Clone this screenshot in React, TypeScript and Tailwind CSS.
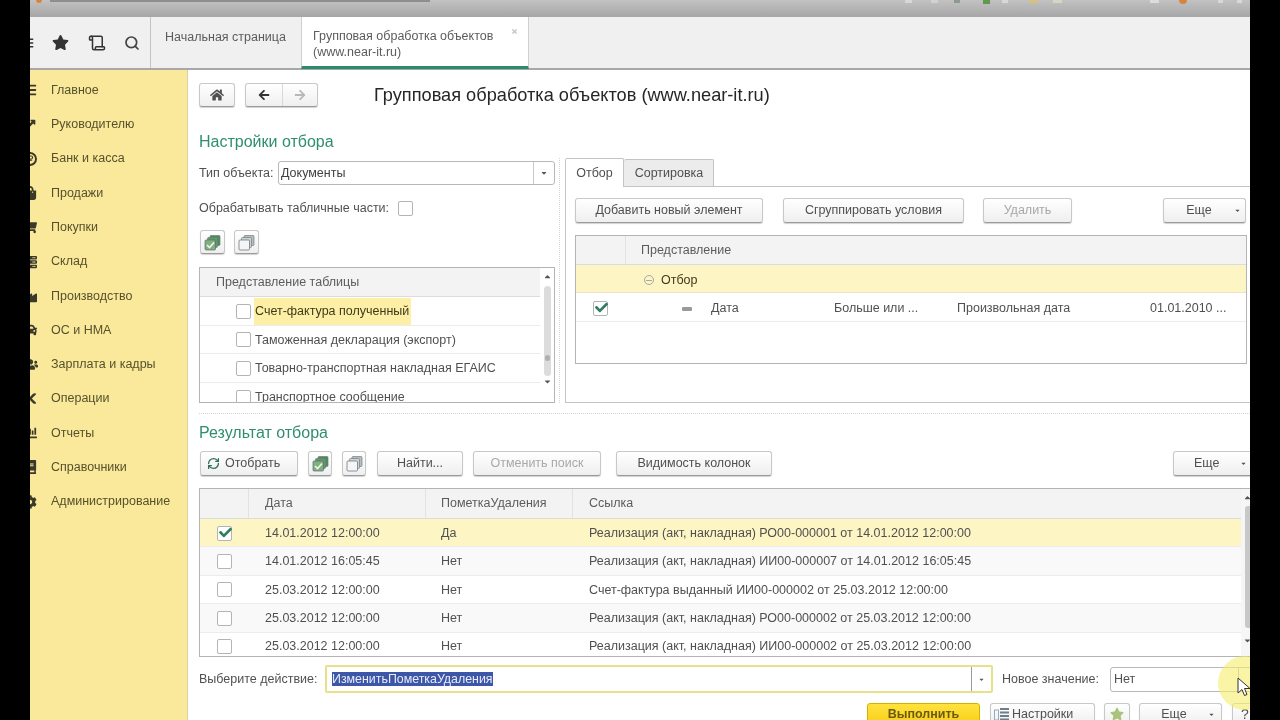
import React from "react";
import { Scroll, Search, RefreshCw } from "lucide-react";
import {
  FaArrowLeft,
  FaArrowRight,
  FaBars,
  FaBook,
  FaCaretDown,
  FaCaretUp,
  FaChartBar,
  FaCheck,
  FaCog,
  FaHome,
  FaIndustry,
  FaLongArrowAltRight,
  FaRubleSign,
  FaServer,
  FaShoppingBag,
  FaShoppingCart,
  FaStar,
  FaTimes,
  FaUsers,
  FaCut,
  FaCar,
} from "react-icons/fa";

const sections = [
  { label: "Главное", icon: <FaBars size={14} /> },
  { label: "Руководителю", icon: <FaLongArrowAltRight size={15} className="-rotate-45" /> },
  {
    label: "Банк и касса",
    icon: (
      <div className="flex h-[14px] w-[14px] items-center justify-center rounded-full border-2 border-[#3b3a2a]">
        <FaRubleSign size={7} />
      </div>
    ),
  },
  { label: "Продажи", icon: <FaShoppingBag size={14} /> },
  { label: "Покупки", icon: <FaShoppingCart size={14} /> },
  { label: "Склад", icon: <FaServer size={14} /> },
  { label: "Производство", icon: <FaIndustry size={14} /> },
  { label: "ОС и НМА", icon: <FaCar size={14} /> },
  { label: "Зарплата и кадры", icon: <FaUsers size={15} /> },
  { label: "Операции", icon: <FaCut size={13} /> },
  { label: "Отчеты", icon: <FaChartBar size={14} /> },
  { label: "Справочники", icon: <FaBook size={14} /> },
  { label: "Администрирование", icon: <FaCog size={14} /> },
];

const tableParts = [
  "Счет-фактура полученный",
  "Таможенная декларация (экспорт)",
  "Товарно-транспортная накладная ЕГАИС",
  "Транспортное сообщение",
];

const results = [
  { date: "14.01.2012 12:00:00", mark: "Да", link: "Реализация (акт, накладная) РО00-000001 от 14.01.2012 12:00:00", checked: true },
  { date: "14.01.2012 16:05:45", mark: "Нет", link: "Реализация (акт, накладная) ИИ00-000007 от 14.01.2012 16:05:45" },
  { date: "25.03.2012 12:00:00", mark: "Нет", link: "Счет-фактура выданный ИИ00-000002 от 25.03.2012 12:00:00" },
  { date: "25.03.2012 12:00:00", mark: "Нет", link: "Реализация (акт, накладная) РО00-000002 от 25.03.2012 12:00:00" },
  { date: "25.03.2012 12:00:00", mark: "Нет", link: "Реализация (акт, накладная) ИИ00-000002 от 25.03.2012 12:00:00" },
];

const Btn = ({
  className = "",
  children,
  disabled,
}: {
  className?: string;
  children?: React.ReactNode;
  disabled?: boolean;
}) => (
  <div
    className={`flex shrink-0 items-center justify-center rounded-[3px] border border-[#c8c8c8] border-b-[#9a9a9a] bg-gradient-to-b from-white to-[#efefef] shadow-[0_1px_1px_rgba(0,0,0,0.18)] ${
      disabled ? "text-[#a8a8a8]" : "text-[#505050]"
    } ${className}`}
  >
    {children}
  </div>
);

const Box = ({ checked, className = "" }: { checked?: boolean; className?: string }) => (
  <div className={`relative h-[15px] w-[15px] shrink-0 rounded-[2px] border border-[#b4b4b4] bg-white ${className}`}>
    {checked && <FaCheck size={13} className="absolute left-[1px] top-[-1px] text-[#2f7d62]" />}
  </div>
);

const StackIcon = ({ green }: { green?: boolean }) => (
  <svg width="17" height="17" viewBox="0 0 17 17">
    <rect x="6" y="1.5" width="10" height="10" rx="1" fill={green ? "#4d8a5c" : "#b9bec2"} stroke="#6f7f78" strokeWidth="0.7" />
    <rect x="3.5" y="3.5" width="10" height="10" rx="1" fill={green ? "#5f9a68" : "#cfd3d6"} stroke="#6f7f78" strokeWidth="0.7" />
    <rect x="1" y="6" width="10.5" height="10" rx="1" fill={green ? "#7eb27d" : "#f4f5f6"} stroke="#667" strokeWidth="0.7" />
    {green && <path d="M3 11l2.5 2.5L10 8.5" stroke="#f2f7ee" strokeWidth="1.6" fill="none" />}
  </svg>
);

const Scrollbar = () => (
  <div className="flex w-[14px] shrink-0 flex-col items-center pt-[4px] text-[#555]">
    <FaCaretUp size={9} />
    <div className="relative mt-[5px] h-[90px] w-[7px] rounded-[4px] bg-[#dcdcdc]">
      <div className="absolute left-[1px] top-[69px] h-[6px] w-[5px] rounded-full bg-[#b0b0b0]" />
    </div>
    <FaCaretDown size={9} className="mt-[1px]" />
  </div>
);

export default function App() {
  return (
    <div className="flex h-[720px] w-[1280px] overflow-hidden bg-black font-['Liberation_Sans',Arial,sans-serif] text-[12.5px] text-[#505050] blur-[0.35px]">
      <div className="w-[30px] shrink-0 bg-black" />

      <div className="relative flex h-full w-[1220px] shrink-0 flex-col overflow-hidden bg-white">
        {/* browser strip */}
        <div className="flex h-[17px] shrink-0 items-start bg-gradient-to-b from-[#c2c2c2] to-[#a6a6a6]">
          <div className="ml-[6px] h-[3px] w-[6px] rounded-b-full bg-[#d9843c]" />
          <div className="ml-[8px] h-[2px] w-[380px] bg-[#8e8e8e]" />
          <div className="ml-[475px] h-[3px] w-[7px] bg-[#d8d8d8]" />
          <div className="ml-[19px] h-[3px] w-[7px] bg-[#d2d2d2]" />
          <div className="ml-[16px] h-[3px] w-[6px] bg-[#8f9a8f]" />
          <div className="ml-[23px] h-[4px] w-[7px] bg-[#5f9a4f]" />
          <div className="ml-[12px] h-[3px] w-[6px] bg-[#d8d8d8]" />
          <div className="ml-[21px] h-[3px] w-[9px] bg-[#d6c27e]" />
          <div className="ml-[15px] h-[3px] w-[9px] bg-[#d6d6c6]" />
          <div className="ml-[88px] h-[3px] w-[9px] bg-[#dcdcdc]" />
          <div className="ml-[20px] h-[4px] w-[8px] rounded-b-full bg-[#d9843c]" />
          <div className="ml-[31px] h-[3px] w-[5px] bg-[#d8d8d8]" />
          <div className="ml-[14px] h-[3px] w-[5px] bg-[#d8d8d8]" />
        </div>

        {/* tab bar */}
        <div className="flex h-[53px] shrink-0 border-b-2 border-[#a8a8a8] bg-[#f0f0f0]">
          <div className="flex w-[121px] shrink-0 items-center border-r border-[#c4c4c4] text-[#333]">
            <FaBars size={12} className="ml-[-8px]" />
            <FaStar size={17} className="ml-[18px]" />
            <Scroll size={18} strokeWidth={2} className="ml-[19px]" />
            <Search size={16} strokeWidth={2.6} className="ml-[18px] text-[#444]" />
          </div>
          <div className="w-[150px] shrink-0 pl-[14px] pt-[11px] text-[#5c5c5c]">Начальная страница</div>
          <div className="relative h-[52px] w-[228px] shrink-0 border-x border-[#d0d0d0] border-b-[3px] border-b-[#2e8a6c] bg-white pl-[11px] pt-[11px] leading-[16px] text-[#5c5c5c]">
            <div>Групповая обработка объектов</div>
            <div>(www.near-it.ru)</div>
            <FaTimes size={7} className="absolute right-[10px] top-[11px] text-[#c4c4c4]" />
          </div>
        </div>

        <div className="flex min-h-0 flex-1">
          {/* sections */}
          <div className="w-[158px] shrink-0 overflow-hidden border-r border-[#d9d2a8] bg-[#fbe99b] pt-[3px] text-[#55512c]">
            {sections.map((s) => (
              <div key={s.label} className="flex h-[34.3px] items-center">
                <div className="ml-[-8px] flex w-[16px] shrink-0 justify-center text-[#3b3a2a]">{s.icon}</div>
                <span className="ml-[13px] whitespace-nowrap">{s.label}</span>
              </div>
            ))}
          </div>

          {/* form */}
          <div className="min-w-0 flex-1 overflow-hidden pl-[11px] pt-[13px]">
            <div className="flex h-[24px] items-stretch">
              <Btn className="w-[36px] text-[#333]">
                <FaHome size={14} />
              </Btn>
              <Btn className="ml-[10px] w-[73px]">
                <div className="flex h-full w-[37px] items-center justify-center border-r border-[#d8d8d8] text-[#333]">
                  <FaArrowLeft size={12} />
                </div>
                <div className="flex h-full flex-1 items-center justify-center text-[#b8b8b8]">
                  <FaArrowRight size={12} />
                </div>
              </Btn>
              <div className="ml-[56px] flex items-center whitespace-nowrap pt-[2px] text-[18.2px] text-[#262626]">
                Групповая обработка объектов (www.near-it.ru)
              </div>
            </div>

            <div className="mt-[24px] flex h-[20px] items-center pt-[1px] text-[16px] text-[#2f8f6b]">Настройки отбора</div>

            <div className="mt-[7px] flex h-[245px]">
              {/* left column */}
              <div className="w-[356px] shrink-0 pt-[3px]">
                <div className="flex h-[24px] items-center">
                  <span className="w-[79px] shrink-0">Тип объекта:</span>
                  <div className="flex h-full flex-1 items-center rounded-[3px] border border-[#b8b8b8] bg-white pl-[2px] text-[#404040]">
                    <span className="flex-1">Документы</span>
                    <div className="flex h-full w-[21px] items-center justify-center border-l border-[#c8c8c8] text-[#555]">
                      <FaCaretDown size={8} />
                    </div>
                  </div>
                </div>
                <div className="mt-[13px] flex h-[20px] items-center">
                  <span>Обрабатывать табличные части:</span>
                  <Box className="ml-[9px]" />
                </div>
                <div className="mt-[12px] flex h-[24px] gap-[9px] pl-[1px]">
                  <Btn className="w-[25px]">
                    <StackIcon green />
                  </Btn>
                  <Btn className="w-[25px]">
                    <StackIcon />
                  </Btn>
                </div>
                <div className="mt-[13px] flex h-[136px] overflow-hidden border border-[#b4b4b4]">
                  <div className="min-w-0 flex-1">
                    <div className="flex h-[29px] items-center border-b border-[#dcdcdc] bg-[#f3f3f3] pl-[16px] text-[#5c5c5c]">
                      Представление таблицы
                    </div>
                    {tableParts.map((t, i) => (
                      <div key={t} className="flex h-[28.6px] items-center border-b border-[#ececec] pl-[36px] pt-[1px]">
                        <Box />
                        <span
                          className={`ml-[3px] flex h-full items-center whitespace-nowrap pl-[1px] pr-[2px] ${
                            i === 0 ? "bg-[#fdf0a6] text-[#3e3a18]" : ""
                          }`}
                        >
                          {t}
                        </span>
                      </div>
                    ))}
                  </div>
                  <Scrollbar />
                </div>
              </div>

              {/* dotted divider */}
              <div className="w-[5px] shrink-0 border-r border-dotted border-[#d4d4d4]" />

              {/* right column */}
              <div className="ml-[5px] min-w-0 flex-1">
                <div className="flex h-[28px] items-end">
                  <div className="z-10 -mb-px flex h-[29px] w-[59px] items-center justify-center rounded-t-[2px] border border-b-0 border-[#c4c4c4] bg-white">
                    Отбор
                  </div>
                  <div className="flex h-[27px] w-[90px] items-center justify-center rounded-t-[2px] border border-l-0 border-b-0 border-[#c4c4c4] bg-[#ececec] pl-[1px]">
                    Сортировка
                  </div>
                </div>
                <div className="h-[217px] border-b border-l border-t border-[#c4c4c4] pl-[9px] pt-[11px]">
                  <div className="flex h-[25px]">
                    <Btn className="w-[188px]">Добавить новый элемент</Btn>
                    <Btn className="ml-[20px] w-[181px]">Сгруппировать условия</Btn>
                    <Btn disabled className="ml-[19px] w-[89px]">
                      Удалить
                    </Btn>
                    <Btn className="ml-[91px] w-[83px]">
                      <span className="flex-1 text-center">Еще</span>
                      <FaCaretDown size={7} className="mr-[4px]" />
                    </Btn>
                  </div>
                  <div className="mt-[12px] h-[129px] w-[672px] border border-[#b4b4b4]">
                    <div className="flex h-[29px] border-b border-[#dcdcdc] bg-[#f3f3f3]">
                      <div className="w-[50px] border-r border-[#e2e2e2]" />
                      <div className="flex items-center pl-[15px] text-[#5c5c5c]">Представление</div>
                    </div>
                    <div className="flex h-[28px] items-center border-b border-[#ece6c0] bg-[#fdf5c4] pl-[68px] pt-[3px] text-[#3e3a18]">
                      <div className="flex h-[10px] w-[10px] items-center justify-center rounded-full border border-[#a8a8a0]">
                        <div className="h-px w-[6px] bg-[#a8a8a0]" />
                      </div>
                      <span className="ml-[7px]">Отбор</span>
                    </div>
                    <div className="flex h-[29px] items-center border-b border-[#ececec] pt-[3px]">
                      <div className="flex w-[50px] justify-center pr-[1px]">
                        <Box checked />
                      </div>
                      <div className="ml-[56px] h-[4px] w-[10px] rounded-[1px] bg-[#9a9a9a]" />
                      <span className="ml-[19px] w-[123px]">Дата</span>
                      <span className="w-[123px]">Больше или ...</span>
                      <span className="w-[193px]">Произвольная дата</span>
                      <span className="whitespace-nowrap">01.01.2010 ...</span>
                    </div>
                  </div>
                </div>
              </div>
            </div>

            <div className="mt-[10px] border-t border-dotted border-[#d4d4d4]" />

            <div className="mt-[8px] flex h-[20px] items-center pt-[1px] text-[16px] text-[#2f8f6b]">Результат отбора</div>

            <div className="mt-[9px] flex h-[25px] pl-[1px]">
              <Btn className="w-[98px] justify-start pl-[6px]">
                <RefreshCw size={13} strokeWidth={2.4} className="text-[#2f6f5c]" />
                <span className="ml-[5px]">Отобрать</span>
              </Btn>
              <Btn className="ml-[10px] w-[24px]">
                <StackIcon green />
              </Btn>
              <Btn className="ml-[10px] w-[24px]">
                <StackIcon />
              </Btn>
              <Btn className="ml-[11px] w-[86px]">Найти...</Btn>
              <Btn disabled className="ml-[10px] w-[128px]">
                Отменить поиск
              </Btn>
              <Btn className="ml-[15px] w-[156px]">Видимость колонок</Btn>
              <Btn className="ml-[401px] w-[90px] justify-start pl-[20px]">
                <span>Еще</span>
                <FaCaretDown size={7} className="ml-[21px]" />
              </Btn>
            </div>

            <div className="mt-[12px] flex h-[169px] overflow-hidden border-y border-l border-[#b4b4b4]">
              <div className="min-w-0 flex-1">
                <div className="flex h-[30px] border-b border-[#dcdcdc] bg-[#f3f3f3] text-[#5c5c5c]">
                  <div className="w-[49px] border-r border-[#e2e2e2]" />
                  <div className="flex w-[177px] items-center border-r border-[#e2e2e2] pl-[16px]">Дата</div>
                  <div className="flex w-[147px] items-center border-r border-[#e2e2e2] pl-[15px]">ПометкаУдаления</div>
                  <div className="flex items-center pl-[16px]">Ссылка</div>
                </div>
                {results.map((r, i) => (
                  <div
                    key={i}
                    className={`flex h-[28.4px] items-center border-b border-[#ececec] pt-[1px] ${
                      r.checked ? "bg-[#fdf5c4]" : i % 2 === 1 ? "bg-[#f9f9f9]" : "bg-white"
                    }`}
                  >
                    <div className="flex w-[49px] shrink-0 justify-center">
                      <Box checked={r.checked} />
                    </div>
                    <span className="w-[177px] shrink-0 pl-[16px]">{r.date}</span>
                    <span className="w-[147px] shrink-0 pl-[15px]">{r.mark}</span>
                    <span className="whitespace-nowrap pl-[16px]">{r.link}</span>
                  </div>
                ))}
              </div>
              <div className="flex w-[9px] shrink-0 flex-col items-center bg-[#f6f6f6] pt-[4px] text-[#555]">
                <FaCaretUp size={9} className="ml-[3px]" />
                <div className="ml-[4px] mt-[4px] h-[122px] w-[5px] rounded-l-[3px] bg-[#c8c8c8]" />
                <FaCaretDown size={9} className="ml-[3px] mt-[8px]" />
              </div>
            </div>

            <div className="mt-[8px] flex h-[28px] items-center">
              <span className="w-[126px] shrink-0">Выберите действие:</span>
              <div className="flex h-full w-[668px] shrink-0 items-center rounded-[2px] border-2 border-[#e8e08a] bg-white pl-[5px]">
                <span className="flex-1">
                  <span className="bg-[#3d56a8] text-[12.4px] text-[#e8ecf8]">ИзменитьПометкаУдаления</span>
                </span>
                <div className="flex h-full w-[20px] items-center justify-center border-l border-[#9a9a9a] text-[#555]">
                  <FaCaretDown size={7} />
                </div>
              </div>
              <span className="ml-[9px] w-[108px] shrink-0">Новое значение:</span>
              <div className="flex h-[25px] w-[160px] shrink-0 items-center rounded-[3px] border border-[#b8b8b8] bg-white pl-[3px]">
                <span className="w-[124px] shrink-0">Нет</span>
                <div className="h-full border-l border-[#b8b8b8]" />
              </div>
            </div>

            {/* bottom edge of the button row runs past the window */}
            <div className="mt-[10px] flex h-[22px] items-stretch pl-[668px]">
              <div className="flex w-[113px] shrink-0 items-center justify-center rounded-[3px] border border-[#d4b200] bg-gradient-to-b from-[#ffe23c] to-[#f9cf10] font-bold text-[#6a5a10]">
                Выполнить
              </div>
              <Btn className="ml-[10px] w-[105px] justify-start pl-[3px]">
                <svg width="15" height="14" viewBox="0 0 15 14" className="mr-[3px]">
                  <rect x="0.5" y="3" width="4" height="10" fill="none" stroke="#9ab" strokeWidth="1" />
                  <path d="M6 2h9M6 5.5h9M6 9h9M6 12.5h9" stroke="#6f7f88" strokeWidth="2" />
                </svg>
                Настройки
              </Btn>
              <Btn className="ml-[9px] w-[26px]">
                <FaStar size={14} className="text-[#a9c47a]" />
              </Btn>
              <Btn className="ml-[9px] w-[83px]">
                <span className="flex-1 text-center">Еще</span>
                <FaCaretDown size={7} className="mr-[6px]" />
              </Btn>
              <Btn className="ml-[10px] w-[26px] text-[14px]">?</Btn>
            </div>
          </div>
        </div>

        {/* video cursor highlight */}
        <div className="absolute left-[1188px] top-[656px] h-[54px] w-[54px] rounded-full bg-[#f6ee6a]/60" />
        <svg className="absolute left-[1207px] top-[677px]" width="14" height="20" viewBox="0 0 14 20">
          <path d="M1 1v15l4-3.5 2.5 6 2.5-1-2.5-6H13z" fill="#fff" stroke="#333" strokeWidth="1" />
        </svg>
      </div>

      <div className="w-[30px] shrink-0 bg-black" />
    </div>
  );
}
